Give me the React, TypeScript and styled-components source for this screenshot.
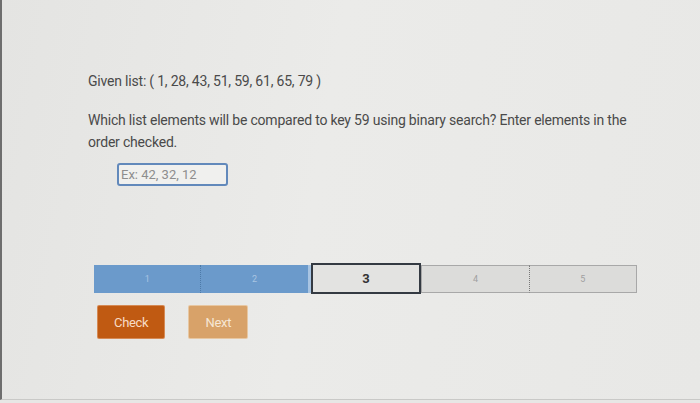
import React from 'react';
import styled, { createGlobalStyle } from 'styled-components';

const GlobalStyle = createGlobalStyle`
  html, body {
    margin: 0;
    padding: 0;
    background: #e7e7e5;
  }
  body {
    font-family: Roboto, "Noto Sans", sans-serif;
  }
`;

const Screen = styled.div`
  width: 700px;
  height: 400px;
  box-sizing: border-box;
  border-left: 2px solid #6e6e6e;
  border-bottom: 1px solid #c9c9c7;
  background: linear-gradient(100deg, #e4e4e2 0%, #ebebe9 45%, #e8e8e6 100%);
  padding: 70px 0 0 86px;
  color: #4a4a4a;
`;

const Paragraph = styled.p`
  margin: 0;
  font-size: 14px;
  line-height: 22px;
  letter-spacing: -0.2px;
  max-width: 560px;
`;

const Question = styled(Paragraph)`
  margin-top: 17px;
`;

const AnswerInput = styled.input`
  display: block;
  margin: 10px 0 0 29px;
  width: 111px;
  height: 23px;
  box-sizing: border-box;
  border: 2px solid #6289bb;
  border-radius: 3px;
  background: #f0f0ee;
  padding: 0 2px;
  font-family: Roboto, sans-serif;
  font-size: 13px;
  color: #444;
  &::placeholder {
    color: #8d8d8d;
  }
`;

const Progress = styled.div`
  display: flex;
  align-items: center;
  margin: 77px 0 0 6px;
  width: 543px;
`;

const Segment = styled.div<{ $state: 'done' | 'current' | 'todo'; $dotted?: boolean }>`
  flex: 1;
  display: flex;
  align-items: center;
  justify-content: center;
  box-sizing: border-box;
  font-size: 9px;
  height: ${(p) => (p.$state === 'current' ? '31px' : '28px')};
  background: ${(p) => (p.$state === 'done' ? '#6b9acb' : p.$state === 'current' ? '#e3e3e1' : '#dcdcda')};
  color: ${(p) => (p.$state === 'done' ? '#a8c4e2' : p.$state === 'current' ? '#333' : '#a0a0a0')};
  border: ${(p) =>
    p.$state === 'current' ? '2px solid #343a42' : p.$state === 'todo' ? '1px solid #a8a8a8' : 'none'};
  border-right-style: ${(p) => (p.$dotted ? 'dotted' : 'solid')};
  border-right-width: ${(p) => (p.$dotted ? '1px' : undefined)};
  border-right-color: ${(p) => (p.$dotted ? (p.$state === 'done' ? '#4d7aa8' : '#777') : undefined)};
  ${(p) => (p.$state === 'todo' && !p.$dotted ? 'border-left: none;' : '')}
  ${(p) => (p.$state === 'current' ? `font-size: 13px; font-weight: 700;` : '')}
`;

const Actions = styled.div`
  display: flex;
  gap: 25px;
  margin: 12px 0 0 10px;
`;

const Button = styled.button<{ $muted?: boolean }>`
  height: 32px;
  padding: 0 16px;
  border: none;
  border-radius: 1px;
  font-family: Roboto, sans-serif;
  font-size: 13px;
  letter-spacing: -0.3px;
  background: ${(p) => (p.$muted ? '#d8a269' : '#c05a12')};
  color: ${(p) => (p.$muted ? '#f6e7d4' : '#f7dcc5')};
  box-shadow: 0 0 0 1px ${(p) => (p.$muted ? '#e7c7a2' : '#d58a55')};
`;

export default function App() {
  const steps: { label: string; state: 'done' | 'current' | 'todo'; dotted?: boolean }[] = [
    { label: '1', state: 'done', dotted: true },
    { label: '2', state: 'done' },
    { label: '3', state: 'current' },
    { label: '4', state: 'todo', dotted: true },
    { label: '5', state: 'todo' },
  ];
  return (
    <>
      <GlobalStyle />
      <Screen>
        <Paragraph>Given list: ( 1, 28, 43, 51, 59, 61, 65, 79 )</Paragraph>
        <Question>
          Which list elements will be compared to key 59 using binary search? Enter elements in the order checked.
        </Question>
        <AnswerInput placeholder="Ex: 42, 32, 12" />
        <Progress>
          {steps.map((s) => (
            <Segment key={s.label} $state={s.state} $dotted={s.dotted}>
              {s.label}
            </Segment>
          ))}
        </Progress>
        <Actions>
          <Button>Check</Button>
          <Button $muted>Next</Button>
        </Actions>
      </Screen>
    </>
  );
}
